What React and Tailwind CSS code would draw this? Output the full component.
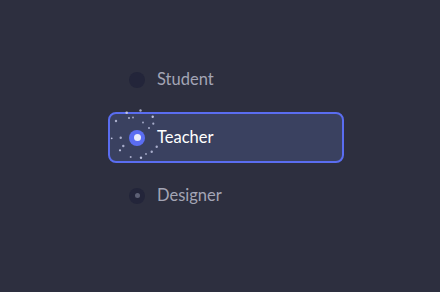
import React, { useState } from "react";

const options = ["Student", "Teacher", "Designer"];

// little specks scattered around the checked radio
const sparks = [
  [126.7, 111.7, 1.3], [140.5, 109.5, 1.2], [116, 120, 1.2], [129, 117, 0.9],
  [133, 116.5, 0.9], [143, 121.5, 0.9], [152.7, 115.7, 1.2], [153.3, 122.7, 1.1],
  [149, 127, 1], [111.7, 137.3, 0.9], [120.7, 136.7, 1.2], [123.3, 145, 1.2],
  [120, 149.3, 1.1], [151.7, 150.7, 1.2], [130.7, 156, 1], [141, 156.7, 1.2],
  [156.7, 145.7, 1.2], [146, 153, 0.9],
];

function Sparks() {
  // coordinates are page pixels; the svg sits over the dot centred at (137,137)
  return (
    <svg
      className="absolute pointer-events-none"
      style={{ left: -29, top: -29 }}
      width="58"
      height="58"
      viewBox="108 108 58 58"
    >
      {sparks.map(([x, y, r], i) => (
        <circle key={i} cx={x} cy={y} r={r} fill="#c4c8e6" opacity={i % 3 === 0 ? 0.95 : 0.8} />
      ))}
    </svg>
  );
}

function Dot({ state }) {
  if (state === "checked") {
    return (
      <span className="relative flex h-4 w-4 shrink-0 items-center justify-center rounded-full bg-[#5b6df2]">
        <span className="h-[7px] w-[7px] rounded-full bg-[#e9ebfb]" />
        <span className="absolute left-1/2 top-1/2">
          <Sparks />
        </span>
      </span>
    );
  }
  if (state === "dim") {
    return (
      <span className="flex h-4 w-4 shrink-0 items-center justify-center rounded-full bg-[#23253a]">
        <span className="h-[5px] w-[5px] rounded-full bg-[#5d6075]" />
      </span>
    );
  }
  return <span className="h-4 w-4 shrink-0 rounded-full bg-[#23253a]" />;
}

export default function App() {
  const [value, setValue] = useState("Teacher");

  return (
    <main
      className="h-[292px] w-[440px] overflow-hidden bg-[#2d2f3f] pl-[108px] pt-[54px]"
      style={{ fontFamily: "Lato, 'Noto Sans', sans-serif" }}
    >
      <div className="flex w-[236px] flex-col gap-[7px]">
        {options.map((opt) => {
          const checked = value === opt;
          const state = checked ? "checked" : opt === "Designer" ? "dim" : "empty";
          return (
            <button
              key={opt}
              onClick={() => setValue(opt)}
              className={
                checked
                  ? "flex h-[51px] items-center gap-3 rounded-lg border-2 border-[#5a6df0] bg-[#3a4160] pl-[19px] text-left"
                  : "flex h-[51px] items-center gap-3 rounded-lg border-2 border-transparent pl-[19px] text-left"
              }
            >
              <Dot state={state} />
              <span className={checked ? "text-[16.5px] text-white" : "text-[16.5px] text-[#a3a5b5]"}>{opt}</span>
            </button>
          );
        })}
      </div>
    </main>
  );
}
